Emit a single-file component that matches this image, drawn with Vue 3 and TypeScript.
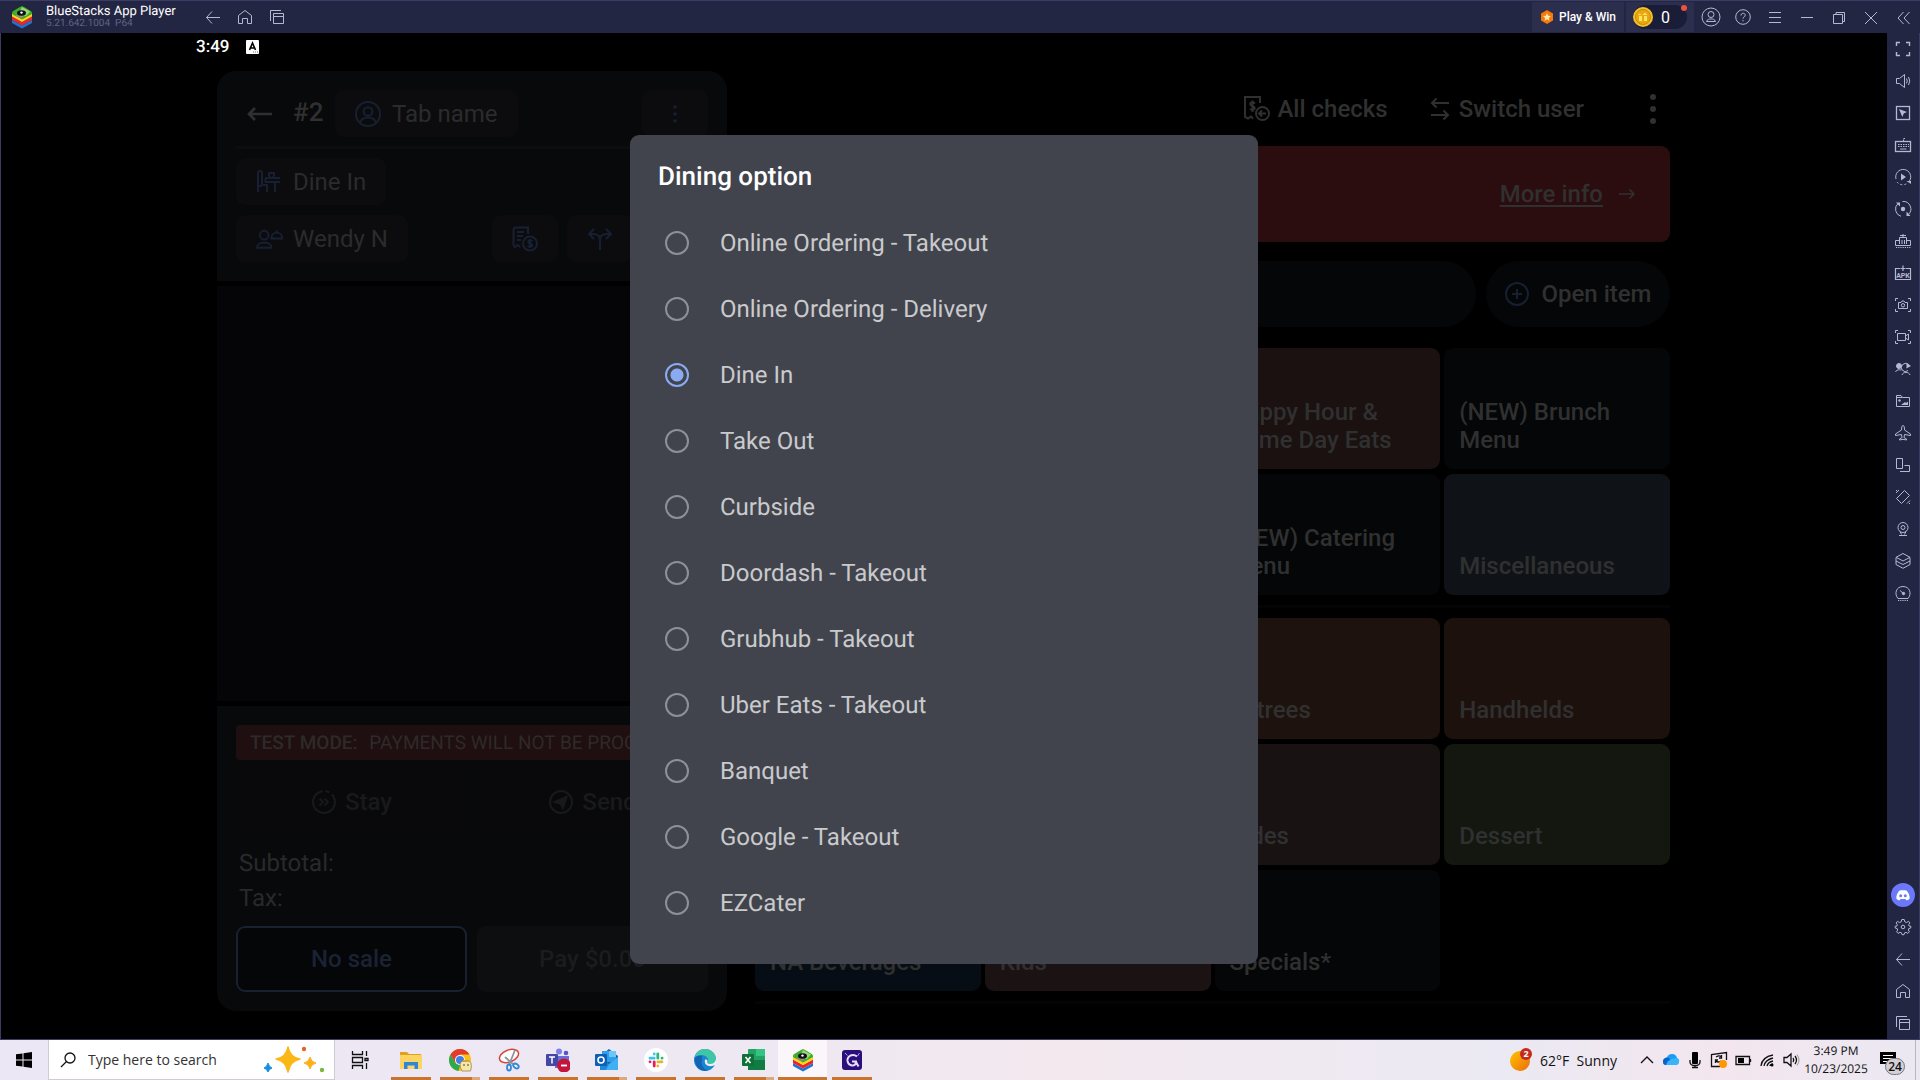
<script setup lang="ts">
import { ref } from 'vue'

interface Tile {
  label: string
  column: number
  color: string
}

interface Glyph {
  name: string
  art: string
}

const options: string[] = [
  'Online Ordering - Takeout',
  'Online Ordering - Delivery',
  'Dine In',
  'Take Out',
  'Curbside',
  'Doordash - Takeout',
  'Grubhub - Takeout',
  'Uber Eats - Takeout',
  'Banquet',
  'Google - Takeout',
  'EZCater',
]
const selected = ref<string>('Dine In')

const upperTiles: Tile[] = [
  { label: 'Happy Hour & Game Day Eats', column: 3, color: '#1a1110' },
  { label: '(NEW) Brunch Menu', column: 4, color: '#040607' },
  { label: '(NEW) Catering Menu', column: 3, color: '#040607' },
  { label: 'Miscellaneous', column: 4, color: '#0f1318' },
]

const lowerTiles: Tile[] = [
  { label: 'Entrees', column: 3, color: '#1d120d' },
  { label: 'Handhelds', column: 4, color: '#1d110d' },
  { label: 'Sides', column: 3, color: '#191213' },
  { label: 'Dessert', column: 4, color: '#131710' },
  { label: 'NA Beverages', column: 1, color: '#060d15' },
  { label: 'Kids', column: 2, color: '#1a1213' },
  { label: 'Specials*', column: 3, color: '#040607' },
]

const backArt = '<path d="M23 16.5H9.5M15 10.500L9.500 16.500L15 22.500"/>'
const homeArt = '<path d="M9.500 22.500V14.500L16 9.500L22.500 14.500V22.500H18.500V17.500H13.500V22.500Z"/>'
const recentArt = '<path d="M9.500 20V9.500H20M12.500 12.500H22.500V22.500H12.500ZM12.500 15.500H22.500"/>'

const navGlyphs: Glyph[] = [
  { name: 'Back', art: backArt },
  { name: 'Home', art: homeArt },
  { name: 'Recent apps', art: recentArt },
]

const windowGlyphs: Glyph[] = [
  { name: 'Account', art: '<circle cx="16" cy="16" r="9"/><circle cx="16" cy="13.500" r="3"/><path d="M11.500 20.500C12.500 18 14 18 16 18S19.500 18 20.500 20.500Z"/>' },
  { name: 'Help', art: '<circle cx="16" cy="16" r="7.300"/><path d="M14 14.500C14 11.500 18.200 11.600 18.200 14.200C18.200 16 16 15.700 16 17.700M16 19V20.300"/>' },
  { name: 'Menu', art: '<path d="M10 11.500H22M10 16.500H22M10 21.500H22"/>' },
  { name: 'Minimize', art: '<path d="M10 16.500H22"/>' },
  { name: 'Restore', art: '<path d="M10.500 13.500H19.500V22.500H10.500ZM13 13V11.500H21.500V20.500H20"/>' },
  { name: 'Close', art: '<path d="M10 11L22 23M22 11L10 23"/>' },
  { name: 'Collapse', art: '<path d="M16.500 11L11 17L16.500 23M22.500 11L17 17L22.500 23"/>' },
]

const toolGlyphs: Glyph[] = [
  { name: 'Full screen', art: '<path d="M9.500 13V9.500H13M19 9.500H22.500V13M22.500 19V22.500H19M13 22.500H9.500V19" stroke-width="1.400"/>' },
  { name: 'Volume', art: '<path d="M9.500 13.500H12.500L17.500 9.500V22.500L12.500 18.500H9.500ZM19.500 13.500Q21 16 19.500 18.500M21.500 12Q24 16 21.500 20"/>' },
  { name: 'Lock cursor', art: '<rect x="9.500" y="9.500" width="13" height="13" stroke-width="1.300"/><path d="M12 12L20 15L16.800 16.500L15.300 20Z" fill="currentColor" stroke="none"/>' },
  { name: 'Game controls', art: '<rect x="8.500" y="12.500" width="15" height="10" stroke-width="1.300"/><path d="M16.500 12V9.500H19M11 15.500H22M11 17.500H22" stroke-dasharray="1.500 1"/><path d="M13 20H19.500"/>' },
  { name: 'Sync operations', art: '<path d="M9 18A7.500 7.500 0 1 1 22.500 20"/><path d="M10 21A7.500 7.500 0 0 0 20 22.500" stroke-dasharray="2 2"/><path d="M14 12.500L19 16L14 19.500ZM19.500 20H24V23Z" fill="currentColor" stroke="none"/>' },
  { name: 'Macro recorder', art: '<path d="M14 23.300A7.500 7.500 0 0 1 11 10.500M15.500 8.500A7.500 7.500 0 0 1 21 21.800"/><circle cx="16" cy="16" r="2.200" fill="currentColor" stroke="none"/><path d="M9 9.500H13V13.500ZM23.500 23H19.500V18.500Z" fill="currentColor" stroke="none"/>' },
  { name: 'Multi instance', art: '<path d="M12 15.500H8.500V20.500H23.500V15.500H20M12.500 19V12.500H19.500V19M15 19V15M17.500 19V15M16 12V9M13 10.500H19"/><path d="M9 22.500H24" stroke-dasharray="1.200 1"/>' },
  { name: 'Install APK', art: '<path d="M13 11.500H8.500V22.500H23.500V11.500H19M16 8.500V14M13.500 11.500H18.500" stroke-width="1.200"/><text x="16" y="21" text-anchor="middle" font-size="7" font-weight="700" fill="currentColor" stroke="none">APK</text>' },
  { name: 'Screenshot', art: '<path d="M8.500 12V9.500H11M21 9.500H23.500V12M23.500 20V22.500H21M11 22.500H8.500V20M11.500 13.500H14L15 12H17L18 13.500H20.500V19.500H11.500Z"/><circle cx="16" cy="16.300" r="1.700"/>' },
  { name: 'Record screen', art: '<path d="M8.500 12V9.500H11M21 9.500H23.500V12M23.500 20V22.500H21M11 22.500H8.500V20M10.500 12.500H18.500V19.500H10.500ZM18.500 15L21.500 13V19L18.500 17"/>' },
  { name: 'Switch profile', art: '<circle cx="12" cy="13" r="2.500" fill="currentColor"/><path d="M8.500 19C9.500 16.500 12 16.500 14.500 17M21 11.500A4 4 0 1 0 21 17.500M15 22C16 18.500 22 18.500 23 22"/><path d="M19.500 9.500L24 13L19.500 15.500Z" fill="currentColor" stroke="none"/>' },
  { name: 'Media folder', art: '<path d="M9.500 21.500V10.500H14L15.500 12.500H22.500V21.500ZM9.500 12.500H15"/><path d="M14 20L18 17L19 18L21 16.500V20Z" fill="currentColor" stroke="none"/><circle cx="12.500" cy="15.500" r="1.200" fill="currentColor" stroke="none"/>' },
  { name: 'Flight', art: '<path d="M16 8.500C17 8.500 17.500 10 17.500 13L23.500 17V18.500L17.500 17.500L17 20.500L19.500 22V23L16 22.300L12.500 23V22L15 20.500L14.500 17.500L8.500 18.500V17L14.500 13C14.500 10 15 8.500 16 8.500Z"/>' },
  { name: 'Rotate', art: '<path d="M9.500 9.500H15.500V19.500H9.500ZM17.500 16.500H22.500V22.500H13"/>' },
  { name: 'Shake', art: '<path d="M9.500 17.500L17.500 9.500L22.500 14.500L14.500 22.500ZM9 12L12 9M9 9.500H10M20 22.500L23 19.500M22 22.500H23"/>' },
  { name: 'Location', art: '<circle cx="16" cy="14.500" r="5"/><circle cx="16" cy="14.500" r="2"/><path d="M13 18.500L14.500 21.500M19 18.500L17.500 21.500M12 22.500H20"/>' },
  { name: 'Layers', art: '<path d="M16 8.500L23 12.300L16 16L9 12.300ZM9 12.500V19.500L16 23.300L23 19.500V12.500M9 16L16 19.500L23 16"/>' },
  { name: 'Performance', art: '<path d="M11 21.500H21C25 17 23 9.500 16 9.500S7 17 11 21.500ZM13 13.500L17 17"/><circle cx="16.500" cy="16.500" r="1.200" fill="currentColor"/><path d="M11 23.500H21" stroke-dasharray="1.200 1"/>' },
]

const systemGlyphs: Glyph[] = [
  { name: 'Discord', art: '<circle cx="16" cy="16" r="12" fill="#6c78fa" stroke="none"/><path d="M12.500 11.500C14 11 18 11 19.500 11.500C21.500 13.500 23 17 22.600 19.700C21.500 20.700 20.300 21.200 19.300 21.300L18.500 20H13.500L12.700 21.300C11.700 21.200 10.500 20.700 9.400 19.700C9 17 10.500 13.500 12.500 11.500Z" fill="#fff" stroke="none"/><circle cx="13.700" cy="16.700" r="1.500" fill="#6c78fa" stroke="none"/><circle cx="18.300" cy="16.700" r="1.500" fill="#6c78fa" stroke="none"/>' },
  { name: 'Settings', art: '<circle cx="16" cy="16" r="1.800"/><path d="M14.800 8.500H17.200L17.800 10.800L19.600 11.500L21.500 10.300L23 12L21.700 13.500L22 15L23.800 15.200V17L21.800 17.600L21.300 19L22.400 20.800L20.800 22.400L19 21.300L17.600 21.800L17 23.700H15L14.400 21.800L13 21.300L11.200 22.400L9.600 20.800L10.700 19L10.200 17.600L8.200 17V15.200L10 15L10.300 13.500L9 12L10.500 10.300L12.400 11.500L14.200 10.800Z"/>' },
  { name: 'Back', art: backArt },
  { name: 'Home', art: homeArt },
  { name: 'Recent apps', art: recentArt },
]

const stackArt =
  '<path d="M2 15L12 20.500L22 15V18L12 23.500L2 18Z" fill="#1c74d4"/><path d="M2 11.500L12 17L22 11.500V15L12 20.500L2 15Z" fill="#e8262c"/><path d="M2 8.500L12 14L22 8.500V11.500L12 17L2 11.500Z" fill="#ffd21a"/><path d="M2 7.500Q2 6 12 1Q22 6 22 7.500V9L12 14.500L2 9Z" fill="#3fae29"/><path d="M12 2L20 6.500L16 11L9 9Z" fill="#9bd67a"/><ellipse cx="11.500" cy="8" rx="4.500" ry="2.800" fill="#101020"/><circle cx="11.500" cy="7.600" r="1.200" fill="#fff"/><path d="M6 10.500Q9 13 13 11.500" stroke="#f46ab0" fill="none"/>'

interface Pinned extends Glyph {
  split?: boolean
  active?: boolean
}

const pinned: Pinned[] = [
  { name: 'File Explorer', art: '<path d="M1 4H8L10 6H22V9H1Z" fill="#e0a21c"/><rect x="1" y="7" width="22" height="14" fill="#fcd463"/><path d="M5 21V14H19V21H15.500V17.500H8.500V21Z" fill="#2e86d6"/>' },
  { name: 'Chrome', split: true, art: '<circle cx="12" cy="12" r="11" fill="#fbc116"/><path d="M2.500 6.500A11 11 0 0 1 21.500 6.500H12L7.200 15Z" fill="#e33b2e"/><path d="M2.500 6.500L7.300 15L12 17.500L10.500 23A11 11 0 0 1 2.500 6.500Z" fill="#2da94f"/><circle cx="12" cy="12" r="5" fill="#fff"/><circle cx="12" cy="12" r="4" fill="#3f7fe8"/><path d="M12 16Q13 12.500 17 12.500Q22 12 23 15Q24 19 22.500 23H14Q12 20 12 16Z" fill="#f6e7a8" stroke="#9b8748" stroke-width=".8"/><circle cx="16" cy="17" r=".8" fill="#333"/><circle cx="20" cy="17" r=".8" fill="#333"/><path d="M14 13Q18 10.500 22 13L20 14H15Z" fill="#d6a33a"/>' },
  { name: 'Snip', art: '<ellipse cx="12" cy="8" rx="10" ry="6" transform="rotate(-22 12 8)" fill="#fff" stroke="#d9443a" stroke-width="1.500"/><path d="M18 2L12 17M8 9L17 17" stroke="#8d959d" stroke-width="1.800"/><ellipse cx="12" cy="19.500" rx="2" ry="3" fill="none" stroke="#3188d8" stroke-width="1.800"/><ellipse cx="19" cy="18" rx="3" ry="2" transform="rotate(35 19 18)" fill="none" stroke="#3188d8" stroke-width="1.800"/>' },
  { name: 'Teams', art: '<circle cx="13" cy="3.500" r="3" fill="#7b83eb"/><circle cx="20" cy="5" r="2.300" fill="#5059c9"/><path d="M9 8H23V15Q22 20 17 20H9Z" fill="#6770d8"/><rect x="0" y="6" width="12" height="12" rx="1" fill="#4348a8"/><path d="M3 9H9M6 9V15.500" stroke="#fff" stroke-width="1.500"/><circle cx="18" cy="17.500" r="7" fill="#c4153c"/><path d="M15 17.500H21" stroke="#fff" stroke-width="1.800"/>' },
  { name: 'Outlook', split: true, art: '<path d="M5 8L14 1L23 8V22H5Z" fill="#1b62b5"/><rect x="7" y="3" width="14" height="11" fill="#2f9fe9"/><path d="M14 3H21V9H14Z" fill="#6cc6fa"/><path d="M5 11L14 16L23 9V22H5Z" fill="#2089dc"/><path d="M14 16L23 9V22H11Z" fill="#3fb0f2"/><rect x="0" y="6" width="12" height="12" rx="1" fill="#0e60b4"/><circle cx="6" cy="12" r="3" fill="none" stroke="#fff" stroke-width="1.600"/>' },
  { name: 'Slack', art: '<circle cx="12" cy="12" r="12" fill="#fff"/><g stroke-width="2.800" stroke-linecap="round" fill="none"><path d="M10.200 6V6.100M6 10.200H10.200" stroke="#36c5f0"/><path d="M13.800 6V10.200M18 10.200H18.100" stroke="#2eb67d"/><path d="M13.800 13.800H18M13.800 18V18.100" stroke="#ecb22e"/><path d="M10.200 13.800V18M6 13.800H6.100" stroke="#e01e5a"/></g>' },
  { name: 'Edge', art: '<circle cx="12" cy="12" r="11" fill="#1a86d2"/><path d="M1.500 10C3 3 8 1 12 1C18 1 23 5.500 23 11C23 15 19.500 17 16 16C13 15 16 14 15 11C14 7 5 5 1.500 10Z" fill="#3fc6a6"/><path d="M9 11Q7 20 15 22.500Q9 24 5 20Q1 15 2 9.500Q5 7 9 8Z" fill="#1464b4"/><path d="M12 11.500Q10.500 17.500 17 18.300Q20 18.500 23 16.500Q24 13 23 11Q22 16.500 16 16Q13.500 15 14.500 13Q15 11 12 11.500Z" fill="#eef0f8"/>' },
  { name: 'Excel', split: true, art: '<rect x="6" y="1" width="17" height="21" rx="1" fill="#21a366"/><path d="M14 1H23V8H14Z" fill="#33c481"/><path d="M6 12H23V22H6Z" fill="#107c41"/><rect x="0" y="6" width="12" height="12" rx="1" fill="#0f7038"/><path d="M3.500 9L8.500 15M8.500 9L3.500 15" stroke="#fff" stroke-width="1.600"/>' },
  { name: 'BlueStacks', active: true, art: stackArt },
  { name: 'Assistant', art: '<rect x="2" y="2" width="20" height="20" rx="3" fill="#2a0f7a"/><path d="M17 8.500Q14 6 10.500 7.500Q7 9.500 7.500 13Q8.500 17.500 13 17.500Q16 17 16 13.500H12M16 14L18.500 18.500" fill="none" stroke="#e6dcff" stroke-width="2"/><path d="M5 5L7.500 7.500M19.500 5L17.500 8" stroke="#b79bff"/>' },
]
</script>

<template>
  <div class="desktop">
    <header class="titlebar">
      <svg class="logo" viewBox="0 0 24 24" v-html="stackArt"></svg>
      <div class="product">
        <span class="product-name">BlueStacks App Player</span>
        <span class="product-version">5.21.642.1004&nbsp; P64</span>
      </div>
      <nav class="nav">
        <button v-for="g in navGlyphs" :key="g.name" class="cell" :aria-label="g.name">
          <svg class="line" viewBox="0 0 32 32" v-html="g.art"></svg>
        </button>
      </nav>
      <button class="play">
        <svg viewBox="0 0 14 14"><path d="M7 0L13 3.500V10.500L7 14L1 10.500V3.500Z" fill="#f5780a" /><path d="M7 3L8.200 5.700L11 6L8.900 7.900L9.500 10.700L7 9.300L4.500 10.700L5.100 7.900L3 6L5.800 5.700Z" fill="#ffe9a8" /></svg>
        Play &amp; Win
      </button>
      <button class="coins">
        <span class="coin-pill">
          <svg viewBox="0 0 20 20"><circle cx="10" cy="10" r="10" fill="#f2c029" /><circle cx="10" cy="10" r="7.500" fill="#e9a714" stroke="#c98a0a" /><path d="M6 9H9V14H6ZM11 9H14V14H11ZM5.500 6.500L9.500 8L12 5.500L14.500 8H5.500Z" fill="#ffe45c" /></svg>
          0
        </span>
        <i class="dot"></i>
      </button>
      <button v-for="g in windowGlyphs" :key="g.name" class="cell" :aria-label="g.name">
        <svg class="line" viewBox="0 0 32 32" v-html="g.art"></svg>
      </button>
    </header>

    <div class="middle">
      <main class="screen">
        <div class="status">
          <span>3:49</span>
          <svg viewBox="0 0 14 14"><rect x="0" y="0" width="13" height="14" rx="1" fill="#fff" /><path d="M3.500 10L6.500 3L9.500 10M4.500 8H8.500" stroke="#000" stroke-width="1.600" fill="none" /><path d="M7 12H12" stroke="#777" stroke-dasharray="1 1" /></svg>
        </div>

        <div class="workspace">
          <section class="check">
            <div class="check-head">
              <div class="row">
                <button class="back" aria-label="Back">
                  <svg viewBox="0 0 26 16"><path d="M25 8H3M8 2L2 8L8 14" fill="none" stroke="#303030" stroke-width="2.600" /></svg>
                </button>
                <strong class="number">#2</strong>
                <button class="chip tab">
                  <svg class="blue" viewBox="0 0 26 26"><circle cx="13" cy="13" r="12" /><circle cx="13" cy="10.500" r="4.300" /><path d="M5 22C6 14.500 20 14.500 21 22" /></svg>
                  Tab name
                </button>
                <span class="grow"></span>
                <button class="chip square" aria-label="More">
                  <svg class="dots" viewBox="0 0 26 26"><circle cx="13" cy="6" r="1.800" /><circle cx="13" cy="13" r="1.800" /><circle cx="13" cy="20" r="1.800" /></svg>
                </button>
              </div>
              <hr class="head-rule" />
              <div class="row">
                <button class="chip">
                  <svg class="blue" viewBox="0 0 26 26"><path d="M2 23V4Q2 2 4 2T6 4V16H11V23M2 17H6M9.500 9H24M9.500 9V13H24M19 13V23M13 4H18V6.500L16.500 9H14.500L13 6.500Z" /></svg>
                  Dine In
                </button>
              </div>
              <div class="row last">
                <button class="chip server">
                  <svg class="blue wide" viewBox="0 0 29 26"><circle cx="8.500" cy="9" r="4.500" /><path d="M1 22C1 15 16 15 16 22ZM15 12.500H28M16 12C16 4.500 27 4.500 27 12M21.500 6V4" /></svg>
                  Wendy N
                </button>
                <span class="grow"></span>
                <button class="chip square" aria-label="Check details">
                  <svg class="blue" viewBox="0 0 26 26"><path d="M8 21L5.500 19L3 21L1.500 19V4Q1.500 1.500 4 1.500H16V8M5 6H12M5 10H11M5 14H9" /><circle cx="18" cy="17.500" r="7" /><path d="M20.500 15Q18 13.500 16.500 15Q16 17 18 17.500Q20.500 18 20 20Q18 21.500 15.500 20M18 13V22" /></svg>
                </button>
                <button class="chip square" aria-label="Split check">
                  <svg class="blue" viewBox="0 0 26 26"><path d="M13 24V14Q13 8 6 8H2M7 3L2 8L7 13M24 8H20Q13 8 13 14M19 3L24 8L19 13" /></svg>
                </button>
                <button class="chip square" aria-label="Guests"></button>
              </div>
            </div>

            <div class="check-list"></div>

            <div class="check-foot">
              <p class="test"><b>TEST MODE:</b> PAYMENTS WILL NOT BE PROCESSED</p>
              <div class="pair">
                <button class="big stay">
                  <svg viewBox="0 0 26 26"><circle cx="13" cy="13" r="11" stroke-dasharray="52 3 4 3" transform="rotate(-10 13 13)" /><path d="M8.500 9.500L12 13L8.500 16.500M13.500 9.500L17 13L13.500 16.500" /></svg>
                  Stay
                </button>
                <button class="big stay">
                  <svg viewBox="0 0 26 26"><circle cx="13" cy="13" r="11" /><path d="M7 13L18.500 8L15 19L12.500 14.500Z" fill="currentColor" /></svg>
                  Send
                </button>
              </div>
              <dl class="totals">
                <dt>Subtotal:</dt>
                <dt>Tax:</dt>
              </dl>
              <div class="pair">
                <button class="big sale">No sale</button>
                <button class="big pay">Pay $0.00</button>
              </div>
            </div>
          </section>

          <section class="menu">
            <div class="menu-top">
              <button class="plain checks">
                <svg viewBox="0 0 26 26"><path d="M9 22.500L7 20.500L4 22.500L1 21V1H16V7M11 7.500Q8.500 5.500 6.500 7Q5.500 9 8.500 10Q11 11 10.500 13Q8.500 14.500 6 13M8.500 4.500V16" /><circle cx="18.500" cy="17.500" r="6.500" /><path d="M22 17.500H15.500M18 14.500L15 17.500L18 20.500" /></svg>
                All checks
              </button>
              <button class="plain switch">
                <svg class="small" viewBox="0 0 20 24"><path d="M19 6H2M6.500 1.500L2 6L6.500 10.500M1 18H18M13.500 13.500L18 18L13.500 22.500" /></svg>
                Switch user
              </button>
              <button class="plain more" aria-label="More options">
                <svg viewBox="0 0 12 32"><g fill="currentColor" stroke="none"><circle cx="6" cy="4" r="3" /><circle cx="6" cy="16" r="3" /><circle cx="6" cy="28" r="3" /></g></svg>
              </button>
            </div>
            <div class="alert">
              <a href="#">More info</a>
              <svg viewBox="0 0 18 12"><path d="M1 6H16M11.500 1.500L16 6L11.500 10.500" fill="none" stroke="#30302f" stroke-width="1.600" /></svg>
            </div>
            <div class="find">
              <input class="search-pill" type="search" aria-label="Search menu" />
              <button class="open">
                <svg class="blue" viewBox="0 0 26 26"><circle cx="13" cy="13" r="11" /><path d="M13 8V18M8 13H18" /></svg>
                Open item
              </button>
            </div>
            <div class="tiles">
              <button v-for="t in upperTiles" :key="t.label" class="tile" :style="{ gridColumn: t.column, background: t.color }">{{ t.label }}</button>
            </div>
            <hr class="rule" />
            <div class="tiles">
              <button v-for="t in lowerTiles" :key="t.label" class="tile" :style="{ gridColumn: t.column, background: t.color }">{{ t.label }}</button>
            </div>
            <hr class="rule end" />
          </section>

          <div class="overlay">
            <form class="dialog" role="dialog" aria-labelledby="dialog-title">
              <h1 id="dialog-title">Dining option</h1>
              <label v-for="o in options" :key="o" class="option">
                <input v-model="selected" type="radio" name="dining" :value="o" />
                {{ o }}
              </label>
            </form>
          </div>
        </div>
      </main>

      <aside class="tools">
        <button v-for="g in toolGlyphs" :key="g.name" class="cell" :aria-label="g.name">
          <svg class="line" viewBox="0 0 32 32" v-html="g.art"></svg>
        </button>
        <span class="grow"></span>
        <button v-for="g in systemGlyphs" :key="g.name" class="cell" :aria-label="g.name">
          <svg class="line" viewBox="0 0 32 32" v-html="g.art"></svg>
        </button>
      </aside>
    </div>

    <footer class="taskbar">
      <button class="start" aria-label="Start">
        <svg viewBox="0 0 16 16"><path d="M0 2.300L6.500 1.400V7.500H0ZM7.500 1.200L16 0V7.500H7.500ZM0 8.500H6.500V14.600L0 13.700ZM7.500 8.500H16V16L7.500 14.800Z" /></svg>
      </button>
      <label class="search">
        <svg class="lens" viewBox="0 0 16 16"><circle cx="10" cy="6" r="5" /><path d="M6.500 9.500L1 15" /></svg>
        <input type="text" placeholder="Type here to search" aria-label="Type here to search" />
        <svg class="spark" viewBox="0 0 64 32"><path d="M24 3Q26 14 36 15Q26 17 24 28Q22 17 12 15Q22 14 24 3Z" fill="#fbb716" stroke="#fbb716" stroke-width="1.500" stroke-linejoin="round" /><path d="M46 13Q47 18 52 19Q47 20 46 25Q45 20 40 19Q45 18 46 13Z" fill="#fbb01a" stroke="#fbb01a" /><path d="M4 19Q5 23 8 24Q5 25 4 28Q3 25 0 24Q3 23 4 19Z" fill="#1b8de0" stroke="#1b8de0" /><circle cx="40" cy="5" r="2.200" fill="#e8632a" /><circle cx="58" cy="26" r="2.200" fill="#7bb843" /></svg>
      </label>
      <button class="view" aria-label="Task view">
        <svg viewBox="0 0 18 18"><path d="M1.500 0V3.500H11.500V0M1.500 18V14.500H11.500V18M1.500 6.500H11.500V11.500H1.500ZM15.500 0V5M15.500 12V18M14 7.500H17V9.500H14Z" /></svg>
      </button>
      <button v-for="p in pinned" :key="p.name" class="pin" :class="{ active: p.active, split: p.split }" :aria-label="p.name">
        <svg viewBox="0 0 24 24" v-html="p.art"></svg>
      </button>
      <span class="grow"></span>
      <button class="weather">
        <svg viewBox="0 0 24 24"><defs><linearGradient id="sun" x1="0" y1="0" x2="1" y2="1"><stop offset="0" stop-color="#ffc400" /><stop offset="1" stop-color="#ec6c0c" /></linearGradient></defs><circle cx="11" cy="13" r="10" fill="url(#sun)" /><circle cx="17" cy="6" r="6" fill="#c42b1c" /><text x="17" y="9" text-anchor="middle" font-size="9" font-weight="700" fill="#fff">2</text></svg>
        62°F&nbsp; Sunny
      </button>
      <div class="tray">
        <svg viewBox="0 0 24 24"><path d="M6 15L12 9L18 15" class="ink" /></svg>
        <svg viewBox="0 0 24 24"><path d="M8 17Q4 17 4 13Q4 10 8 9.500Q9 6 13 6Q17 6 18 10Q20.500 11 20 14Q19.500 17 16 17Z" fill="#1b9cf3" /><path d="M8 17Q6 14 9 12L17 10Q21 11 20 14Q19.500 17 16 17Z" fill="#36b6fa" /><path d="M4 14Q4 10 8 9.500Q11 10 11 12Q8 13 7 17Q4 17 4 14Z" fill="#0a62c9" /></svg>
        <svg viewBox="0 0 24 24"><rect x="9" y="4" width="6" height="12" rx="1" /><path d="M7 12V14Q7 17.500 12 17.500Q17 17.500 17 14V12M12 17.500V20M9 19.500H15" class="ink" /></svg>
        <svg viewBox="0 0 24 24"><path d="M13 18.500H4.500V6.500L19.500 4.500V12M9 9Q12 7 14 8.500M14.500 7V10H12M14 13Q11 15 9 13M8.500 15V12H11" class="ink" /><circle cx="16" cy="16" r="4" fill="#ff9800" /></svg>
        <svg viewBox="0 0 24 24"><path d="M5 8.500H18.500V16.500H5ZM19.500 11V14" class="ink" /><rect x="7" y="10" width="6" height="5" /></svg>
        <svg viewBox="0 0 24 24"><path d="M6 18Q7 9 18 7M9 18Q10 12 18 10M12 18Q13 14 18 13M15 18Q15 16.500 18 16" class="ink" /><circle cx="17" cy="17" r="1.500" /></svg>
        <svg viewBox="0 0 24 24"><path d="M5 9.500H8L12 6V18L8 14.500H5ZM14 10Q15.500 12 14 14M16 8Q19 12 16 16" class="ink" /><path d="M18 6.500Q22 12 18 17.500" fill="none" stroke="#9a979e" /></svg>
      </div>
      <time class="clock"><span>3:49 PM</span><span>10/23/2025</span></time>
      <button class="notes" aria-label="Notifications">
        <svg viewBox="0 0 16 16"><path d="M0 0H16V12H10L7 15V12H0Z" /><path d="M3 3.500H13M3 6.500H13M3 9.500H8" stroke="#fff" /></svg>
        <span class="count">24</span>
      </button>
    </footer>
  </div>
</template>

<style>
html,
body {
  background: #000;
}
</style>

<style scoped>
* {
  box-sizing: border-box;
}
button {
  border: 0;
  margin: 0;
  padding: 0;
  background: none;
  color: inherit;
  font: inherit;
}
.grow {
  flex: 1;
}
.desktop {
  display: flex;
  flex-direction: column;
  min-height: 100vh;
  font-family: Roboto, "Liberation Sans", sans-serif;
  text-rendering: geometricPrecision;
}

/* emulator window frame */
.titlebar {
  display: flex;
  height: 33px;
  padding-right: 1px;
  border-top: 1px solid #3a3c66;
  background: #232642;
  color: #fff;
}
.logo {
  width: 24px;
  height: 24px;
  margin: 4px 12px 0 10px;
}
.product {
  display: flex;
  flex-direction: column;
  width: 151px;
  white-space: nowrap;
}
.product-name {
  font-size: 13px;
  line-height: 14px;
  margin-top: 4px;
}
.product-version {
  font-size: 10px;
  line-height: 10px;
  color: #5f6282;
}
.nav {
  display: flex;
  flex: 1;
}
.cell {
  width: 32px;
  height: 32px;
  color: #b6b8d2;
}
.line {
  display: block;
  width: 32px;
  height: 32px;
  fill: none;
  stroke: currentColor;
}
.play,
.coins {
  display: flex;
  align-items: center;
  height: 30px;
  margin: 1px 2px 0 0;
  background: #2b2e4c;
  white-space: nowrap;
}
.coins {
  margin-right: 1px;
}
.play {
  width: 92px;
  padding-left: 8px;
  gap: 5px;
  font-size: 12px;
  font-weight: 500;
}
.play svg {
  width: 14px;
  height: 14px;
}
.coins {
  position: relative;
  width: 68px;
  padding-left: 7px;
}
.coin-pill {
  display: flex;
  align-items: center;
  gap: 8px;
  width: 54px;
  height: 24px;
  border-radius: 12px;
  background: #1a1d37;
  font-size: 16px;
}
.coin-pill svg {
  width: 20px;
  height: 20px;
}
.dot {
  position: absolute;
  top: 3px;
  right: 7px;
  width: 6px;
  height: 6px;
  border-radius: 50%;
  background: #f0503c;
}
.middle {
  display: flex;
  flex: 1;
  border: 1px solid #3a3c66;
  border-top: 0;
}
.tools {
  display: flex;
  flex-direction: column;
  width: 32px;
  background: #232642;
}
.tools .cell {
  flex: none;
}

/* android screen */
.screen {
  display: flex;
  flex: 1;
  flex-direction: column;
  min-width: 0;
  background: #000;
}
.status {
  display: flex;
  align-items: center;
  gap: 17px;
  height: 27px;
  padding-left: 195px;
  color: #fff;
  font-size: 17px;
  font-weight: 500;
}
.status svg {
  width: 14px;
  height: 14px;
}
.workspace {
  position: relative;
  display: flex;
  flex: 1;
  gap: 28px;
  padding: 11px 217px 28px 216px;
  color: #303030;
  font-size: 24px;
  line-height: 28px;
}
.workspace svg {
  width: 26px;
  height: 26px;
  flex: none;
}
.check {
  display: flex;
  flex: 510 1 0;
  flex-direction: column;
  gap: 5px;
  min-width: 0;
  overflow: hidden;
  border-radius: 19px;
}
.check-head,
.check-foot {
  padding: 19px;
  background: #08090b;
}
.check-list {
  flex: 1;
  background: #050507;
}
.row {
  display: flex;
  height: 47px;
}
.row.last {
  gap: 9px;
  margin-top: 10px;
}
.head-rule {
  height: 3px;
  margin: 9px 0;
  border: 0;
  background: #0c0d0f;
}
.back {
  width: 57px;
  padding-left: 11px;
  text-align: left;
}
.workspace .back svg {
  display: block;
  height: 16px;
}
.number {
  width: 42px;
  font-size: 26px;
  font-weight: 500;
  line-height: 47px;
}
.chip {
  display: flex;
  align-items: center;
  gap: 11px;
  padding: 0 20px;
  border-radius: 9px;
  background: #0c0c0e;
  color: #2b2b2c;
  white-space: nowrap;
}
.square {
  width: 66px;
}
.blue {
  fill: none;
  stroke: #162032;
  stroke-width: 2;
}
.workspace .wide {
  width: 28px;
}
.server {
  gap: 9px;
}
.dots {
  fill: #162032;
}
.test {
  height: 35px;
  margin: 0 0 9px;
  padding-left: 14px;
  overflow: hidden;
  border-radius: 4px;
  background: #1f0f10;
  color: #2e2a2a;
  font-size: 19px;
  line-height: 36px;
  white-space: nowrap;
}
.test b {
  margin-right: 7px;
  font-weight: 500;
}
.pair {
  display: grid;
  grid-template-columns: 1fr 1fr;
  gap: 10px;
}
.big {
  display: flex;
  align-items: center;
  justify-content: center;
  gap: 8px;
  height: 66px;
  border-radius: 9px;
  font-weight: 500;
}
.stay {
  background: #09090b;
  color: #18191b;
}
.stay svg {
  fill: none;
  stroke: currentColor;
  stroke-width: 2;
}
.totals {
  margin: 11px 3px 10px;
  color: #28292a;
  line-height: 35px;
}
.sale {
  border: 2px solid #182031;
  background: #050608;
  color: #1a2234;
}
.pay {
  background: #0d0e10;
  color: #1b1c1e;
}

/* menu side */
.menu {
  flex: 915 1 0;
  min-width: 0;
}
.menu-top {
  display: flex;
  align-items: center;
  justify-content: flex-end;
  height: 75px;
}
.plain {
  display: flex;
  align-items: center;
  gap: 7px;
  font-weight: 500;
  white-space: nowrap;
}
.plain svg {
  fill: none;
  stroke: currentColor;
  stroke-width: 2;
}
.workspace .small {
  width: 20px;
  height: 24px;
}
.switch {
  gap: 9px;
  margin: 0 63px 0 42px;
}
.workspace .more svg {
  width: 12px;
  height: 32px;
}
.more {
  margin-right: 11px;
}
.alert {
  display: flex;
  align-items: center;
  justify-content: flex-end;
  gap: 15px;
  height: 96px;
  margin-bottom: 19px;
  padding-right: 34px;
  border-radius: 9px;
  background: #2b0d10;
}
.alert a {
  color: #30302f;
  font-weight: 500;
  text-decoration-thickness: 2px;
  text-underline-offset: 3px;
}
.workspace .alert svg {
  width: 18px;
  height: 12px;
}
.find {
  display: flex;
  gap: 10px;
  height: 66px;
  margin-bottom: 21px;
}
.search-pill {
  flex: 1;
  min-width: 0;
  border: 0;
  border-radius: 33px;
  background: #040607;
}
.open {
  display: flex;
  align-items: center;
  justify-content: center;
  gap: 11px;
  width: 184px;
  border-radius: 33px;
  background: #040607;
  font-weight: 500;
  white-space: nowrap;
}
.tiles {
  display: grid;
  grid-template-columns: repeat(4, 1fr);
  grid-auto-rows: 121px;
  gap: 5px 4px;
}
.tile {
  display: flex;
  align-items: flex-end;
  padding: 15px;
  border-radius: 9px;
  font-weight: 500;
  text-align: left;
}
.rule {
  height: 3px;
  margin: 10px 0;
  border: 0;
  background: #040405;
}
.rule.end {
  margin-bottom: 0;
}

/* dialog */
.overlay {
  position: absolute;
  inset: 0;
  display: flex;
  align-items: center;
  justify-content: center;
}
.dialog {
  width: 628px;
  padding: 28px;
  border-radius: 9px;
  background: #42444d;
  color: #c9cacc;
}
.dialog h1 {
  margin: 0 0 19px;
  color: #fff;
  font-size: 26px;
  font-weight: 500;
  line-height: 28px;
}
.option {
  display: flex;
  align-items: center;
  gap: 31px;
  height: 66px;
  padding-left: 7px;
}
.option input {
  appearance: none;
  width: 24px;
  height: 24px;
  margin: 0;
  border: 2px solid #8f8f97;
  border-radius: 50%;
}
.option input:checked {
  border-color: #8aabf2;
  background: radial-gradient(circle, #8aabf2 6px, transparent 7px);
}

/* windows taskbar */
.taskbar {
  display: flex;
  height: 40px;
  background: linear-gradient(90deg, #ebe7f4, #eee8f2 40%, #f3e8ee 55%, #ebe9f3 78%, #f3e6ee 90%, #ebe8f2);
  color: #111;
  font-family: "Open Sans", "Noto Sans", sans-serif;
}
.start {
  width: 48px;
}
.start svg {
  display: block;
  width: 16px;
  height: 16px;
  margin: auto;
}
.search {
  display: flex;
  align-items: center;
  width: 287px;
  padding: 0 6px 0 11px;
  border: 1px solid #cfcdd3;
  border-top: 0;
  background: #fff;
}
.search input {
  flex: 1;
  min-width: 0;
  padding: 0 0 0 12px;
  border: 0;
  background: none;
  font: 14px "Open Sans", "Noto Sans", sans-serif;
}
.search input::placeholder {
  color: #333;
  opacity: 1;
}
.lens {
  width: 16px;
  height: 16px;
  fill: none;
  stroke: #111;
  stroke-width: 1.3;
}
.spark {
  width: 64px;
  height: 32px;
}
.view {
  width: 51px;
}
.view svg {
  display: block;
  width: 18px;
  height: 18px;
  margin: 0 0 0 16px;
  fill: none;
  stroke: #111;
  stroke-width: 1.3;
}
.pin {
  display: flex;
  flex-direction: column;
  align-items: center;
  width: 49px;
  padding-top: 8px;
}
.pin svg {
  width: 24px;
  height: 24px;
  margin-bottom: 5px;
}
.pin::after {
  content: "";
  width: 40px;
  height: 3px;
  background: #c8732e;
}
.pin.split::after {
  background: linear-gradient(90deg, #c8732e 80%, #dba77e 80%);
}
.pin.active {
  background: #faf6f9;
}
.pin.active::after {
  width: 49px;
}
.weather {
  display: flex;
  align-items: center;
  gap: 7px;
  margin-right: 18px;
  font-size: 14px;
  white-space: nowrap;
}
.weather svg {
  width: 24px;
  height: 24px;
}
.tray {
  display: flex;
  align-items: center;
}
.tray svg {
  width: 24px;
  height: 24px;
}
.ink {
  fill: none;
  stroke: #111;
  stroke-width: 1.3;
}
.clock {
  display: flex;
  flex-direction: column;
  justify-content: center;
  width: 66px;
  font-size: 12px;
  line-height: 18px;
  text-align: center;
}
.notes {
  position: relative;
  width: 47px;
  margin-right: 4px;
  border-right: 1px solid #b9b6c0;
}
.notes svg {
  display: block;
  width: 16px;
  height: 16px;
  margin: 0 0 0 11px;
}
.count {
  position: absolute;
  top: 18px;
  left: 16px;
  width: 20px;
  height: 17px;
  border: 1px solid #77747c;
  border-radius: 9px;
  background: #d3d1d6;
  font-size: 12px;
  font-weight: 600;
  line-height: 15px;
  text-align: center;
}
</style>
